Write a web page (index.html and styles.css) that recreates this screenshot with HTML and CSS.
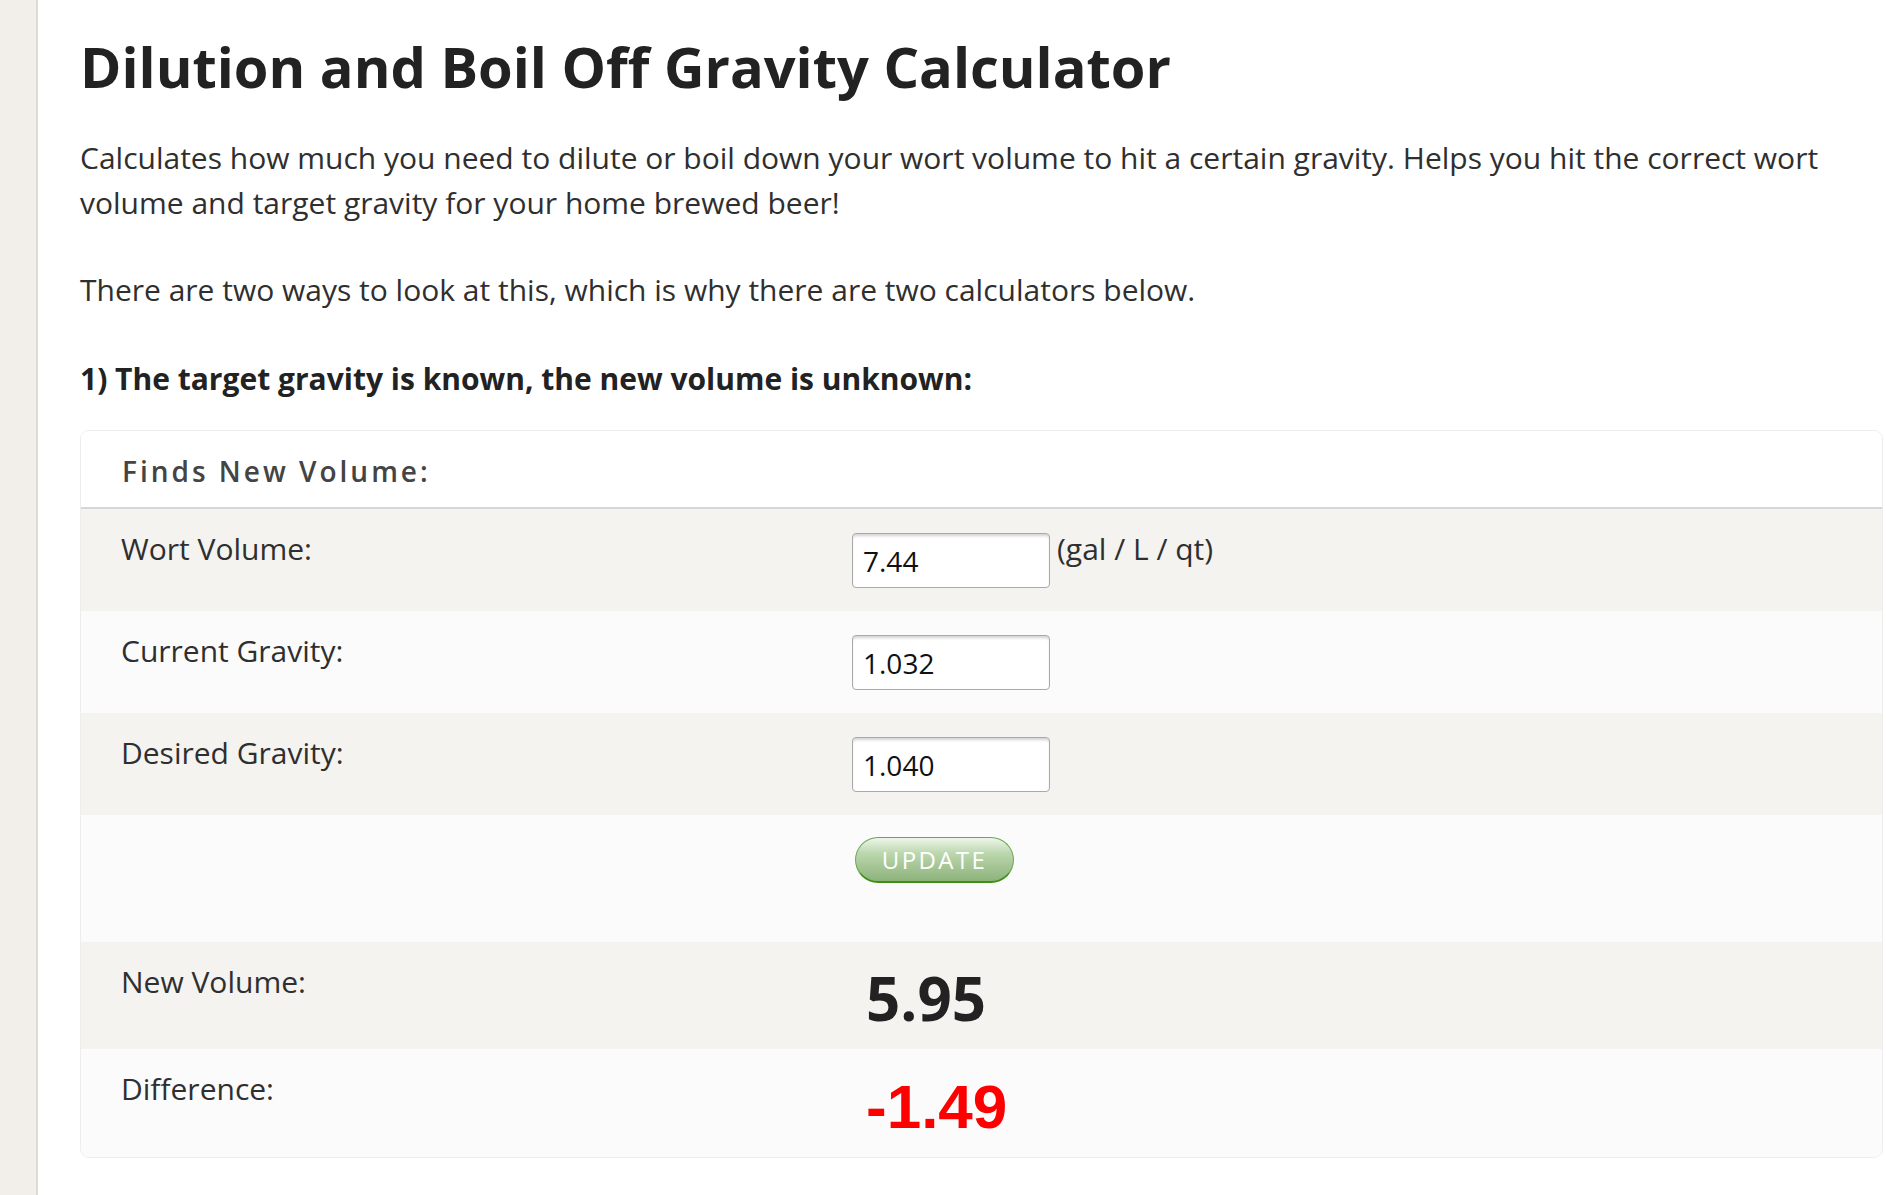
FILE: index.html
```html
<!DOCTYPE html>
<html lang="en">
  <head>
    <meta charset="UTF-8" />
    <meta name="viewport" content="width=device-width, initial-scale=1.0" />
    <title>Dilution and Boil Off Gravity Calculator</title>
    <link rel="stylesheet" href="styles.css">
  </head>
  <body>
    <div class="page">
      <aside class="rail"></aside>

      <main class="content">
        <h1>Dilution and Boil Off Gravity Calculator</h1>
        <p class="intro">
          Calculates how much you need to dilute or boil down your wort volume to hit a certain gravity. Helps you hit the correct wort volume and target gravity for your home brewed beer!
        </p>
        <p class="intro second">
          There are two ways to look at this, which is why there are two calculators below.
        </p>
        <h3>1) The target gravity is known, the new volume is unknown:</h3>

        <form class="calc" id="calc-volume">
          <div class="calc-head">Finds New Volume:</div>

          <div class="calc-row shade">
            <label for="wort">Wort Volume:</label>
            <div class="field">
              <input type="text" id="wort" value="7.44" />
              <span class="unit">(gal / L / qt)</span>
            </div>
          </div>

          <div class="calc-row">
            <label for="current">Current Gravity:</label>
            <div class="field">
              <input type="text" id="current" value="1.032" />
            </div>
          </div>

          <div class="calc-row shade">
            <label for="desired">Desired Gravity:</label>
            <div class="field">
              <input type="text" id="desired" value="1.040" />
            </div>
          </div>

          <div class="calc-row action">
            <span></span>
            <div class="field">
              <button type="button">Update</button>
            </div>
          </div>

          <div class="calc-row result shade">
            <span class="label">New Volume:</span>
            <div class="value">5.95</div>
          </div>

          <div class="calc-row result last">
            <span class="label">Difference:</span>
            <div class="value diff">-1.49</div>
          </div>
        </form>
      </main>
    </div>
  </body>
</html>
```

FILE: styles.css
```css
* {
  margin: 0;
  padding: 0;
  box-sizing: border-box;
}

body {
  font-family: "Open Sans", "Liberation Sans", sans-serif;
  color: #333;
  background-color: white;
  overflow: hidden;
}

.page {
  display: flex;
  min-height: 100vh;
}

.rail {
  width: 38px;
  flex-shrink: 0;
  background-color: #f2efea;
  border-right: 2px solid #dedbd6;
}

.content {
  flex: 1;
  padding: 0 3px 0 42px;
}

h1 {
  margin-top: 30px;
  font-size: 56px;
  line-height: 72px;
  font-weight: 700;
  color: #222;
}

.intro {
  margin-top: 33px;
  font-size: 30px;
  line-height: 45px;
  color: #2f2f2f;
}

.intro.second {
  margin-top: 42px;
}

h3 {
  margin-top: 44px;
  font-size: 30px;
  line-height: 45px;
  font-weight: 700;
  color: #222;
}

.calc {
  margin-top: 29px;
  border: 1px solid #ededeb;
  border-radius: 9px;
  overflow: hidden;
  background-color: #fbfbfb;
}

.calc-head {
  padding: 19px 41px 15px;
  background-color: white;
  border-bottom: 2px solid #d6d6d6;
  font-size: 28px;
  line-height: 42px;
  font-weight: 600;
  letter-spacing: 3px;
  color: #444;
}

.calc-row {
  display: grid;
  grid-template-columns: 771px 1fr;
  align-items: start;
  padding: 17px 0;
  background-color: #fbfbfb;
}

.calc-row.shade {
  background-color: #f4f3ef;
}

.calc-row label,
.calc-row .label {
  padding-left: 40px;
  font-size: 30px;
  line-height: 45px;
  color: #2f2f2f;
}

.field {
  display: flex;
  align-items: flex-start;
  gap: 7px;
}

.field input {
  margin: 7px 0 6px;
  width: 198px;
  height: 55px;
  padding: 0 10px;
  border: 1px solid #a9a9a9;
  border-radius: 4px;
  box-shadow: inset 0 3px 3px -1px rgba(0, 0, 0, 0.18);
  font-family: "Open Sans", sans-serif;
  font-size: 28px;
  color: #111;
  background-color: white;
}

.unit {
  font-size: 30px;
  line-height: 45px;
  color: #2f2f2f;
}

.calc-row.action {
  padding: 22px 0 59px;
}

.field button {
  margin-left: 3px;
  width: 159px;
  height: 46px;
  border: 1px solid #6aa84f;
  border-bottom: 2px solid #3f8f14;
  border-radius: 9999px;
  background: linear-gradient(to bottom, #eef6ea 0%, #bcd7ae 35%, #8db27b 100%);
  color: white;
  font-family: "Open Sans", sans-serif;
  font-size: 24px;
  letter-spacing: 2.4px;
  text-transform: uppercase;
  cursor: pointer;
}

.calc-row.result {
  padding: 17px 0 16px;
}

.calc-row.last {
  padding-bottom: 17px;
}

.value {
  padding: 2px 0 0 14px;
  margin-bottom: -2px;
  font-size: 60px;
  line-height: 74px;
  font-weight: 700;
  color: #222;
}

.value.diff {
  padding-top: 4px;
  margin-bottom: -4px;
  font-family: "Liberation Sans", Arial, sans-serif;
  font-size: 62px;
  color: #ff0000;
}
```
